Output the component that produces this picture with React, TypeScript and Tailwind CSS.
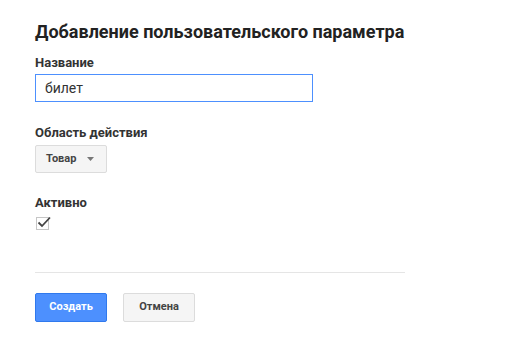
import React from 'react'

const font = { fontFamily: 'Roboto, Arial, sans-serif' }

const App = () => {
    return (
        <div className="min-h-[356px] w-[505px] bg-white pl-[35px] pt-[20px] text-[#222]" style={font}>
            <h1 className="text-[18px] leading-[24px] font-bold text-[#222]">
                Добавление пользовательского параметра
            </h1>

            <div className="mt-[11px] text-[13px] leading-[16px] font-bold text-[#333]">Название</div>
            <div className="mt-[3px] flex h-[28px] w-[278px] items-center border border-[#4d90fe] px-[9px] text-[14px] text-[#333]">
                билет
            </div>

            <div className="mt-[23px] text-[13px] leading-[16px] font-bold text-[#333]">Область действия</div>
            <div className="mt-[4px] flex h-[28px] w-[72px] items-center justify-between rounded-[2px] border border-[#dcdcdc] bg-[#f5f5f5] pl-[10px] pr-[12px] text-[11px] font-bold text-[#444]">
                <span>Товар</span>
                <svg width="7" height="4" viewBox="0 0 7 4">
                    <path d="M0 0 L7 0 L3.5 4 Z" fill="#777" />
                </svg>
            </div>

            <div className="mt-[22px] text-[13px] leading-[16px] font-bold text-[#333]">Активно</div>
            <div className="relative mt-[6px] ml-[1px] h-[13px] w-[13px] border border-[#c6c6c6] bg-white">
                <svg width="14" height="12" viewBox="0 0 14 12" className="absolute left-[0px] top-[-2px]">
                    <path d="M1.5 6.5 L5 10 L13 1.5" stroke="#444" strokeWidth="1.8" fill="none" />
                </svg>
            </div>

            <div className="mt-[42px] h-px w-[370px] bg-[#e5e5e5]" />

            <div className="mt-[20px] flex gap-[16px]">
                <button className="h-[29px] w-[72px] rounded-[2px] border border-[#3079ed] bg-[#4d90fe] text-[11px] font-bold text-white">
                    Создать
                </button>
                <button className="h-[29px] w-[72px] rounded-[2px] border border-[#dcdcdc] bg-[#f5f5f5] text-[11px] font-bold text-[#444]">
                    Отмена
                </button>
            </div>
        </div>
    )
}

export default App
